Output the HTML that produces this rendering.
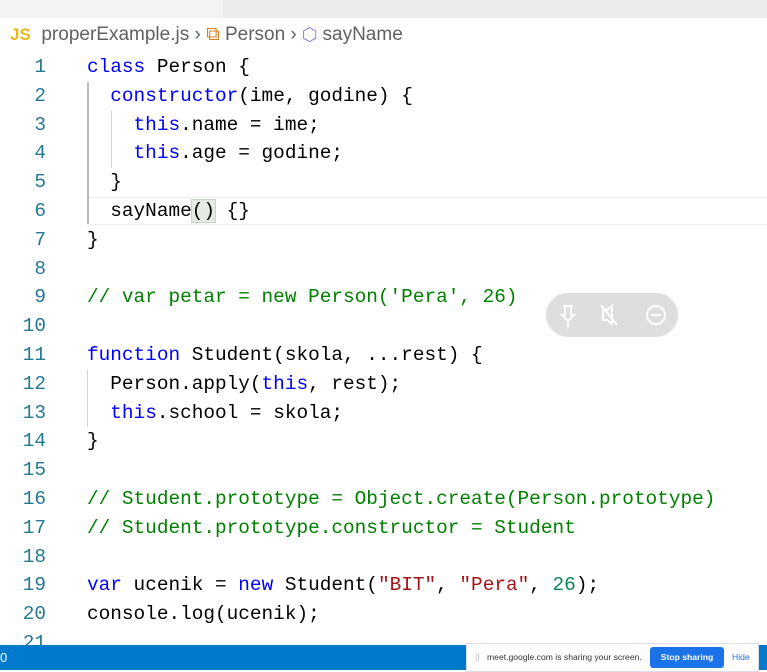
<!DOCTYPE html>
<html><head><meta charset="utf-8"><style>
body{margin:0;width:767px;height:670px;overflow:hidden;background:#fff;position:relative;font-family:"Liberation Sans",sans-serif}
.top{position:absolute;left:0;top:0;width:767px;height:18px;background:#f3f3f3}
.top2{position:absolute;left:223px;top:0;width:544px;height:18px;background:#ececec}
.bc{position:absolute;top:24px;left:10px;font-size:19px;color:#616161;white-space:nowrap}
.code{position:absolute;left:0;top:53px;font-family:"Liberation Mono",monospace;font-size:19.4px}
.ln{position:absolute;height:28.8px;line-height:28.8px;white-space:pre}
.n{width:46px;text-align:right;color:#237893}
.t{left:87px;color:#000}
.k{color:#0000ff}.s{color:#a31515}.m{color:#098658}.c{color:#008000}
.hl{position:absolute;left:87px;top:197px;width:680px;height:26px;border-top:1px solid #eeeeee;border-bottom:1px solid #eeeeee}
.g{position:absolute;width:1px;background:#d3d3d3}
.status{position:absolute;left:0;top:645px;width:767px;height:25px;background:#007acc}
.share{position:absolute;left:466px;top:643px;width:291px;height:27px;background:#fff;border:1px solid #dde;font-size:8.6px;color:#333;white-space:nowrap}
.pill{position:absolute;left:546px;top:293px;width:132px;height:44px;border-radius:22px;background:#dedede}
</style></head><body>
<div class="top"></div><div class="top2"></div>
<div class="bc"><span style="color:#e8b81a;font-weight:bold;font-size:17px">JS</span>&nbsp; properExample.js &#8250; <span style="color:#d67e1e">⧉</span> Person &#8250; <span style="color:#7b4fbf">⬡</span> sayName</div>
<div class="hl"></div>
<div class="g" style="left:87px;top:82px;height:142px;background:#b9b9b9;width:2px"></div>
<div class="g" style="left:111px;top:111px;height:57px"></div>
<div class="g" style="left:87px;top:370px;height:57px"></div>
<div class="code">
<div class="ln n" style="top:0">1</div><div class="ln t" style="top:0"><span class="k">class</span> Person {</div>
<div class="ln n" style="top:28.8px">2</div><div class="ln t" style="top:28.8px">  <span class="k">constructor</span>(ime, godine) {</div>
<div class="ln n" style="top:57.6px">3</div><div class="ln t" style="top:57.6px">    <span class="k">this</span>.name = ime;</div>
<div class="ln n" style="top:86.4px">4</div><div class="ln t" style="top:86.4px">    <span class="k">this</span>.age = godine;</div>
<div class="ln n" style="top:115.2px">5</div><div class="ln t" style="top:115.2px">  }</div>
<div class="ln n" style="top:144px">6</div><div class="ln t" style="top:144px">  sayName<span style="background:#e2ece2;outline:1px solid #c8d4c8">()</span> {}</div>
<div class="ln n" style="top:172.8px">7</div><div class="ln t" style="top:172.8px">}</div>
<div class="ln n" style="top:201.6px">8</div>
<div class="ln n" style="top:230.4px">9</div><div class="ln t c" style="top:230.4px">// var petar = new Person('Pera', 26)</div>
<div class="ln n" style="top:259.2px">10</div>
<div class="ln n" style="top:288px">11</div><div class="ln t" style="top:288px"><span class="k">function</span> Student(skola, ...rest) {</div>
<div class="ln n" style="top:316.8px">12</div><div class="ln t" style="top:316.8px">  Person.apply(<span class="k">this</span>, rest);</div>
<div class="ln n" style="top:345.6px">13</div><div class="ln t" style="top:345.6px">  <span class="k">this</span>.school = skola;</div>
<div class="ln n" style="top:374.4px">14</div><div class="ln t" style="top:374.4px">}</div>
<div class="ln n" style="top:403.2px">15</div>
<div class="ln n" style="top:432px">16</div><div class="ln t c" style="top:432px">// Student.prototype = Object.create(Person.prototype)</div>
<div class="ln n" style="top:460.8px">17</div><div class="ln t c" style="top:460.8px">// Student.prototype.constructor = Student</div>
<div class="ln n" style="top:489.6px">18</div>
<div class="ln n" style="top:518.4px">19</div><div class="ln t" style="top:518.4px"><span class="k">var</span> ucenik = <span class="k">new</span> Student(<span class="s">"BIT"</span>, <span class="s">"Pera"</span>, <span class="m">26</span>);</div>
<div class="ln n" style="top:547.2px">20</div><div class="ln t" style="top:547.2px">console.log(ucenik);</div>
<div class="ln n" style="top:576px">21</div>
</div>
<div class="pill">
<svg width="132" height="44" viewBox="0 0 132 44" fill="none" stroke="#fff" stroke-width="2">
<path d="M17 13h10M19 13v9h-3l6 6 6-6h-3v-9M22 28v6"/>
<path d="M57 17h4l5-4v18l-5-4h-4zM55 12l16 20"/>
<circle cx="110" cy="22" r="9"/><path d="M105 22h10"/>
</svg></div>
<div class="status"><span style="color:#fff;font-size:13px;position:absolute;left:0;top:5px">0</span></div>
<div class="share"><span style="position:absolute;left:8px;top:8px;color:#bbb">||</span><span style="position:absolute;left:20px;top:8px">meet.google.com is sharing your screen.</span>
<span style="position:absolute;left:183px;top:3px;width:74px;height:21px;background:#1a73e8;color:#fff;border-radius:3px;text-align:center;line-height:21px;font-weight:bold">Stop sharing</span>
<span style="position:absolute;left:265px;top:8px;color:#1a73e8">Hide</span></div>
</body></html>
